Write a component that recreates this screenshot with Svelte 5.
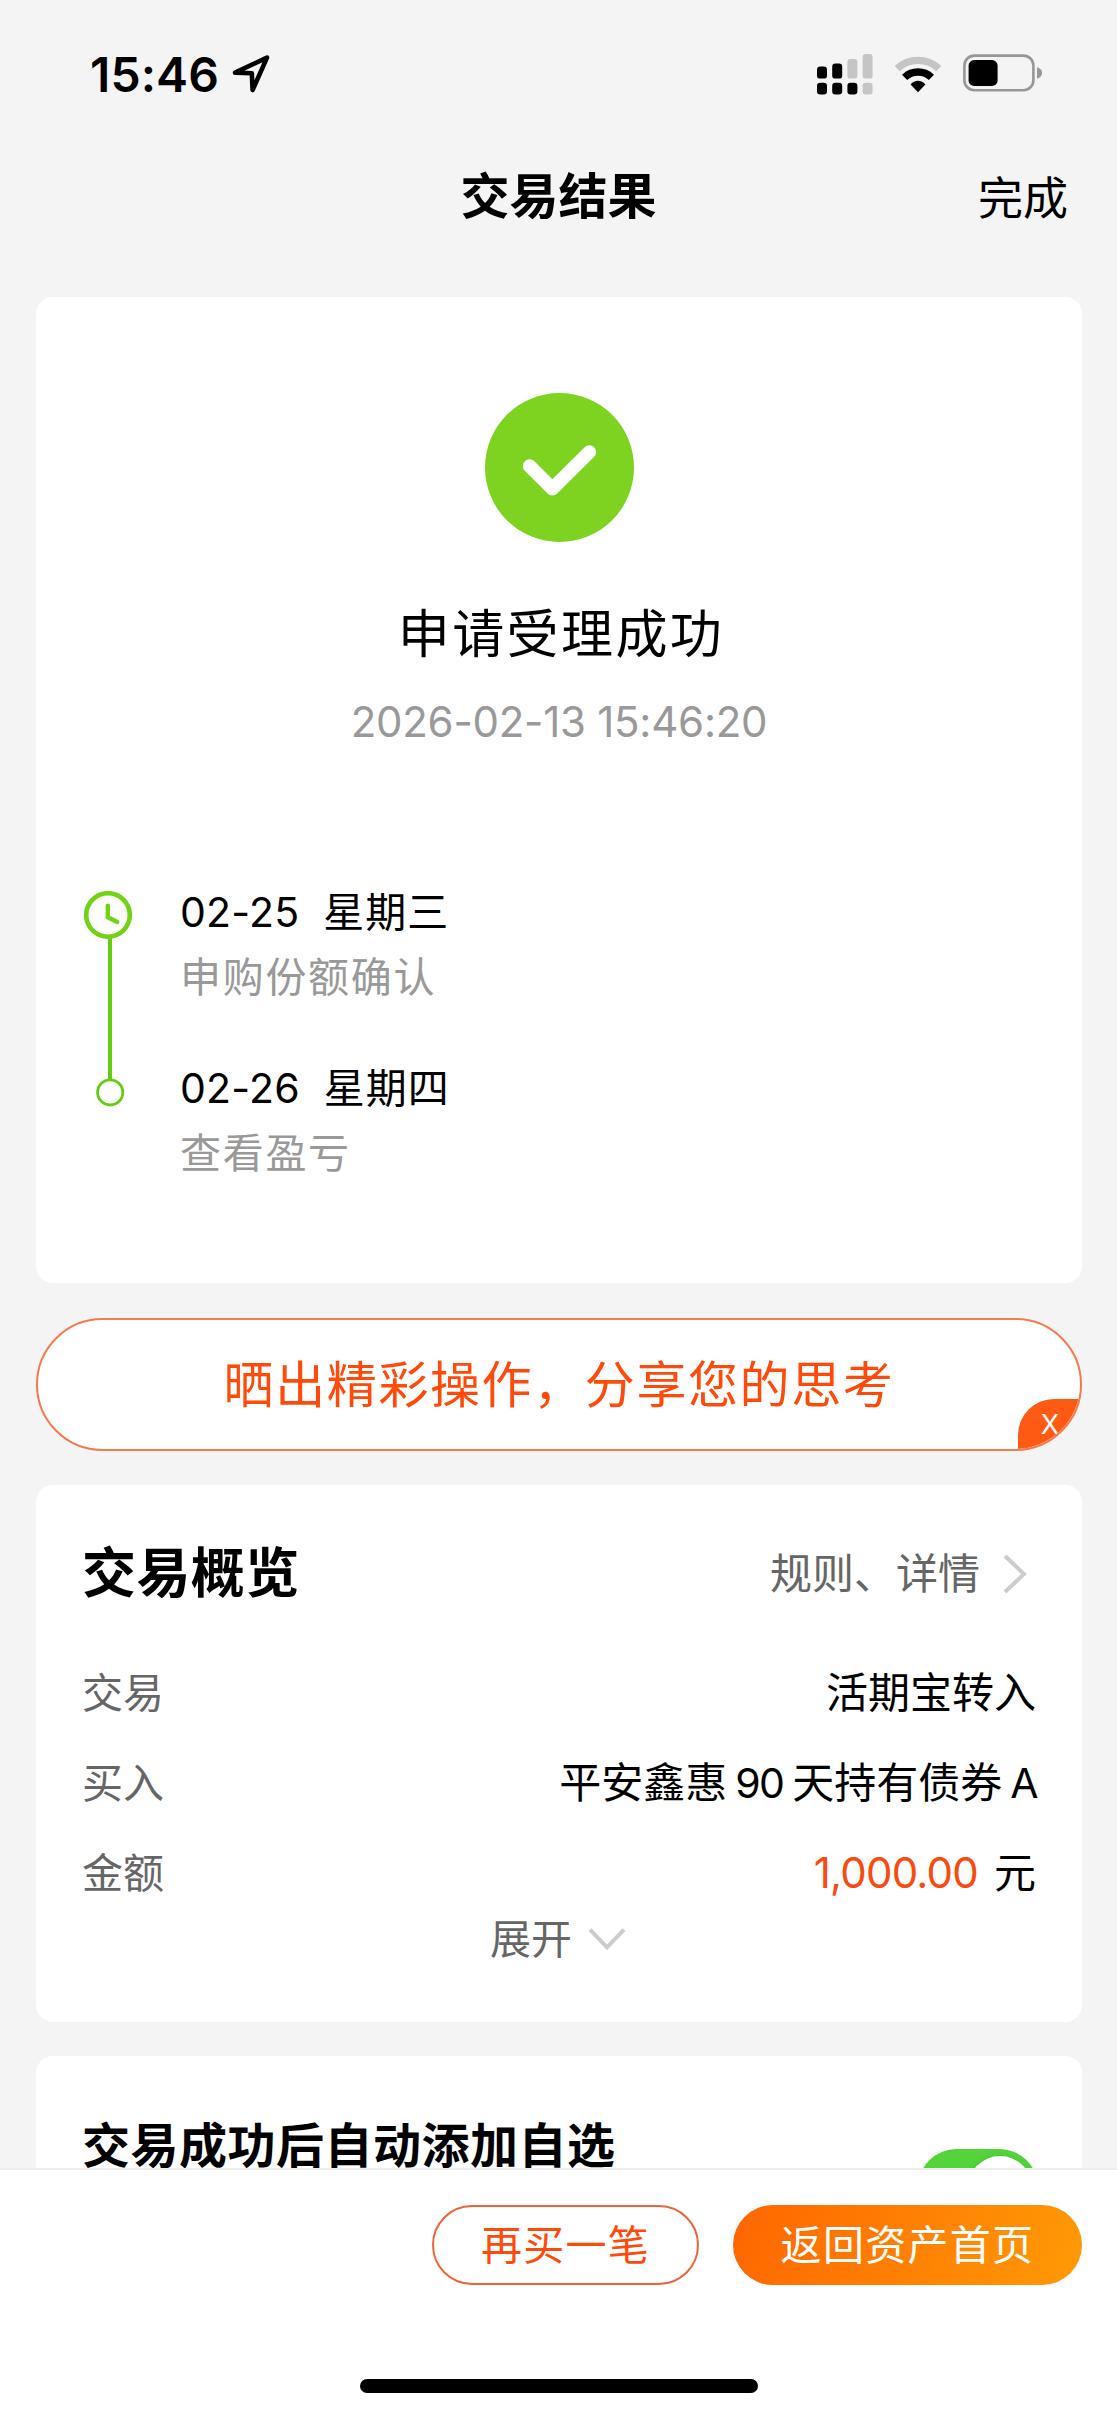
<script>
  const steps = [
    { date: '02-25', day: '星期三', note: '申购份额确认' },
    { date: '02-26', day: '星期四', note: '查看盈亏' }
  ];
</script>

<div class="screen">
  <header class="status">
    <div class="clock">
      <span class="time">15:46</span>
      <svg class="locate" width="40" height="40" viewBox="0 0 40 40">
        <path d="M4 18.6 36 3.6 21.6 36 20.8 19.2Z" fill="none" stroke="#000" stroke-width="4.6" stroke-linejoin="round" />
      </svg>
    </div>
    <div class="indicators">
      <svg width="56" height="42" viewBox="0 0 56 42">
        <g fill="#000">
          <rect x="0" y="13.6" width="10" height="12" rx="3.2" />
          <rect x="15.2" y="10.6" width="10" height="15" rx="3.2" />
          <rect x="0" y="29.8" width="10" height="11.6" rx="3.2" />
          <rect x="15.2" y="29.8" width="10" height="11.6" rx="3.2" />
          <rect x="30.4" y="29.8" width="10" height="11.6" rx="3.2" />
        </g>
        <g fill="#c5c5c5">
          <rect x="30.4" y="6" width="10" height="19.6" rx="3.2" />
          <rect x="45.6" y="1" width="10" height="24.6" rx="3.2" />
          <rect x="45.6" y="29.8" width="10" height="11.6" rx="3.2" />
        </g>
      </svg>
      <svg class="wifi" width="48" height="42" viewBox="0 0 48 42">
        <path d="M3.2 15.6A30.5 30.5 0 0 1 44.8 15.6" fill="none" stroke="#c5c5c5" stroke-width="7.4" />
        <path d="M10.6 24.4A19.4 19.4 0 0 1 37.4 24.4" fill="none" stroke="#000" stroke-width="7.4" />
        <path d="M24 39.2 16.6 31.4C20.6 26.6 27.4 26.6 31.4 31.4Z" fill="#000" />
      </svg>
      <svg class="battery" width="80" height="42" viewBox="0 0 80 42">
        <rect x="1.4" y="3.6" width="69" height="34.6" rx="10" fill="none" stroke="#979797" stroke-width="2.6" />
        <rect x="5.6" y="8" width="29" height="26" rx="5.6" fill="#000" />
        <path d="M74 15.2C77.8 16.4 79 18.4 79 20.9S77.8 25.4 74 26.6Z" fill="#979797" />
      </svg>
    </div>
  </header>

  <nav class="bar">
    <h1>交易结果</h1>
    <button class="done">完成</button>
  </nav>

  <main>
    <section class="card result">
      <svg class="tick" width="149" height="149" viewBox="0 0 149 149">
        <circle cx="74.5" cy="74.5" r="74.5" fill="#7ed321" />
        <path d="M44.6 73 67.4 95.8 104.4 59" fill="none" stroke="#fff" stroke-width="13.6" stroke-linecap="round" stroke-linejoin="round" />
      </svg>
      <h2>申请受理成功</h2>
      <p class="stamp">2026-02-13 15:46:20</p>
      <div class="timeline">
        <svg class="rail" width="48" height="217" viewBox="0 0 48 217">
          <path d="M26 46V188" stroke="#66cc11" stroke-width="4" />
          <circle cx="24" cy="24" r="21.8" fill="#fff" stroke="#72d316" stroke-width="4.6" />
          <path d="M23.8 14.6V26.2L33.2 31" fill="none" stroke="#72d316" stroke-width="4.4" stroke-linecap="round" stroke-linejoin="round" />
          <circle cx="26.2" cy="201.4" r="12.6" fill="#fff" stroke="#66cc11" stroke-width="2.8" />
        </svg>
        <ol>
          {#each steps as step}
            <li>
              <div class="when"><span>{step.date}</span><span class="day">{step.day}</span></div>
              <div class="note">{step.note}</div>
            </li>
          {/each}
        </ol>
      </div>
    </section>

    <div class="share">
      <span>晒出精彩操作，分享您的思考</span>
      <button class="dismiss">X</button>
    </div>

    <section class="card overview">
      <div class="head">
        <h3>交易概览</h3>
        <a class="rules">规则、详情
          <svg width="26" height="42" viewBox="0 0 26 42">
            <path d="M3 3 22 21 3 39" fill="none" stroke="#ccc" stroke-width="4" />
          </svg>
        </a>
      </div>
      <dl>
        <div class="row"><dt>交易</dt><dd>活期宝转入</dd></div>
        <div class="row fund"><dt>买入</dt><dd>平安鑫惠<span class="latin">90</span>天持有债券<span class="latin last">A</span></dd></div>
        <div class="row"><dt>金额</dt><dd><span class="amount">1,000.00</span>元</dd></div>
      </dl>
      <div class="expand">
        展开
        <svg width="38" height="24" viewBox="0 0 38 24">
          <path d="M2 2.6 19 20.4 36 2.6" fill="none" stroke="#ccc" stroke-width="4" />
        </svg>
      </div>
    </section>

    <section class="card favourite">
      <h3>交易成功后自动添加自选</h3>
      <div class="toggle"><i></i></div>
    </section>
  </main>

  <footer>
    <div class="actions">
      <button class="again">再买一笔</button>
      <button class="home">返回资产首页</button>
    </div>
    <div class="indicator"></div>
  </footer>
</div>

<style>
  :global(body) {
    margin: 0;
    background: #f4f4f4;
  }
  .screen {
    width: 1117px;
    height: 2417px;
    display: flex;
    flex-direction: column;
    overflow: hidden;
    background: #f4f4f4;
    color: #000;
    font-family: Inter, 'Noto Sans CJK SC', sans-serif;
    font-size: 41px;
    line-height: 50px;
  }
  h1, h2, h3, p, ol, dl, dd {
    margin: 0;
    padding: 0;
  }
  ol {
    list-style: none;
  }
  button {
    border: 0;
    padding: 0;
    background: none;
    font: inherit;
    color: inherit;
    white-space: nowrap;
  }
  svg {
    display: block;
    flex: none;
  }

  .status {
    flex: none;
    height: 150px;
    box-sizing: border-box;
    padding: 50px 74px 0 90px;
    display: flex;
    justify-content: space-between;
    align-items: flex-start;
  }
  .clock,
  .indicators {
    display: flex;
    align-items: flex-start;
  }
  .time {
    width: 128px;
    font-size: 48px;
    font-weight: 600;
    letter-spacing: 0.1px;
    white-space: nowrap;
  }
  .locate {
    margin: 4px 0 0 13px;
  }
  .indicators {
    padding-top: 3px;
  }
  .wifi {
    margin-left: 20.5px;
  }
  .battery {
    margin-left: 21.5px;
    margin-top: -1px;
  }

  .bar {
    flex: none;
    height: 147px;
    display: grid;
    grid-template-columns: 1fr auto 1fr;
    align-items: start;
  }
  h1 {
    grid-column: 2;
    padding-top: 22px;
    font-size: 49px;
    font-weight: 600;
  }
  .done {
    justify-self: end;
    padding: 24px 49px 0 0;
    font-size: 45px;
  }

  main {
    flex: 1;
    min-height: 0;
    overflow: hidden;
    padding: 0 35px 0 36px;
  }
  .card {
    box-sizing: border-box;
    border-radius: 17px;
    background: #fff;
  }

  .result {
    height: 986px;
    padding: 96px 48px 0;
    display: flex;
    flex-direction: column;
    align-items: center;
  }
  h2 {
    margin-top: 63px;
    font-size: 52px;
    font-weight: 400;
    line-height: 60px;
    letter-spacing: 2.4px;
    padding-left: 4px;
  }
  .stamp {
    margin-top: 32px;
    font-size: 42px;
    letter-spacing: -0.25px;
    color: #999;
    white-space: nowrap;
  }
  .timeline {
    align-self: stretch;
    display: flex;
    gap: 48px;
    margin-top: 140px;
  }
  .rail {
    margin-top: 4px;
  }
  li {
    height: 176px;
  }
  .when {
    display: flex;
    gap: 24px;
    letter-spacing: 0.2px;
  }
  .day {
    letter-spacing: 1px;
  }
  .note {
    margin-top: 15px;
    letter-spacing: 1.7px;
    color: #999;
  }

  .share {
    position: relative;
    box-sizing: border-box;
    height: 133px;
    margin: 35px 0 34px;
    border: 2px solid #f57a4e;
    border-radius: 67px;
    background: #fff;
    overflow: hidden;
    display: flex;
    align-items: center;
    justify-content: center;
    font-size: 50px;
    letter-spacing: 1.6px;
    color: #ff4a0a;
  }
  .dismiss {
    position: absolute;
    right: -2px;
    bottom: -2px;
    width: 64px;
    height: 52px;
    border-radius: 36px 0 0 0;
    background: #ff5a14;
    color: #fff;
    font-size: 27px;
    line-height: 50px;
    letter-spacing: 0;
  }

  .overview {
    height: 537px;
    padding: 63px 46px 0;
  }
  .head {
    display: flex;
    justify-content: space-between;
    align-items: center;
  }
  h3 {
    font-size: 54px;
    font-weight: 600;
    letter-spacing: 0.4px;
    white-space: nowrap;
  }
  .rules {
    display: flex;
    align-items: center;
    gap: 22px;
    padding: 1px 8px 0 0;
    font-size: 42px;
    color: #666;
  }
  dl {
    margin-top: 69px;
  }
  .row {
    height: 90px;
    display: flex;
    justify-content: space-between;
  }
  dt {
    color: #666;
  }
  .row dd {
    font-size: 42px;
    white-space: nowrap;
  }
  .fund dd {
    margin-right: -1px;
  }
  .latin {
    margin: 0 9px 0 8px;
    font-size: 41px;
    letter-spacing: -1.6px;
  }
  .latin.last {
    margin-right: 0;
  }
  .amount {
    margin-right: 16px;
    letter-spacing: -0.8px;
    color: #f94b10;
  }
  .expand {
    display: flex;
    justify-content: center;
    align-items: center;
    gap: 16px;
    margin-top: -24px;
    padding-right: 2px;
    color: #666;
  }

  .favourite {
    height: 300px;
    margin-top: 34px;
    padding: 68px 44px 0 46px;
    display: flex;
    justify-content: space-between;
    align-items: flex-start;
  }
  .favourite h3 {
    font-size: 48px;
    line-height: 44px;
    letter-spacing: 0.5px;
  }
  .toggle {
    width: 120px;
    height: 77px;
    margin-top: 25px;
    box-sizing: border-box;
    padding: 6.5px;
    border-radius: 39px;
    background: #54d43a;
    display: flex;
    justify-content: flex-end;
  }
  .toggle i {
    width: 64px;
    height: 64px;
    border-radius: 50%;
    background: #fff;
    box-shadow: 0 3px 8px rgba(0, 0, 0, 0.2);
  }

  footer {
    flex: none;
    height: 249px;
    box-sizing: border-box;
    border-top: 2px solid #ededed;
    padding: 35px 35px 0 36px;
    background: #fff;
  }
  .actions {
    display: flex;
    justify-content: flex-end;
    gap: 34px;
  }
  .actions button {
    box-sizing: border-box;
    height: 80px;
    border-radius: 40px;
    letter-spacing: 1.3px;
  }
  .again {
    width: 267px;
    border: 2px solid #f26238;
    color: #ff4a0a;
  }
  .home {
    width: 349px;
    background: linear-gradient(105deg, #ff6600, #ff9a06);
    color: #fff;
  }
  .indicator {
    width: 398px;
    height: 14px;
    margin: 94px auto 0;
    border-radius: 7px;
    background: #000;
  }
</style>
